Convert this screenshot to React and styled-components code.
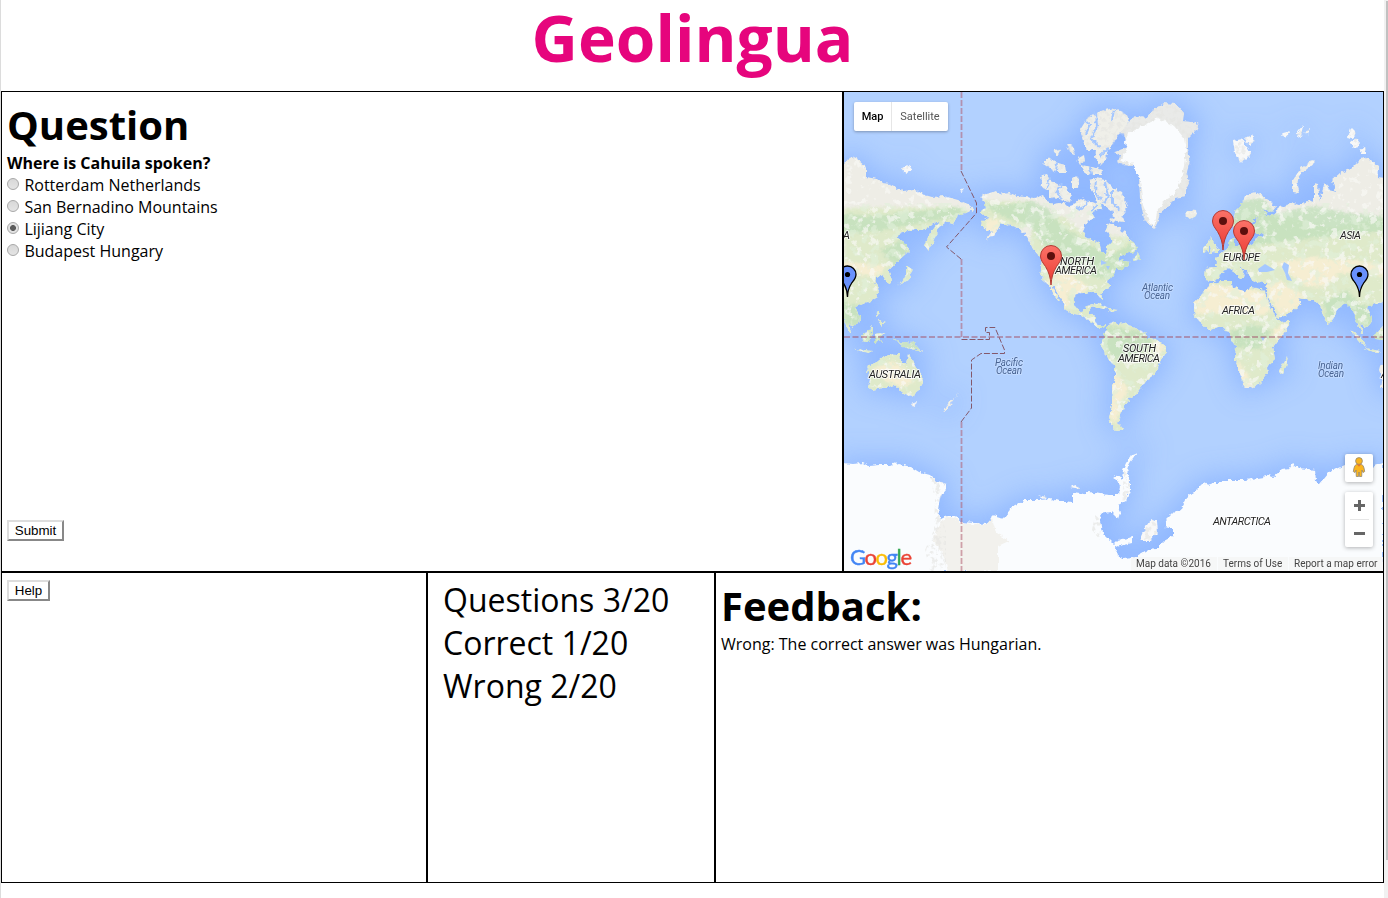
import React, { useState } from "react";
import styled, { createGlobalStyle } from "styled-components";

const GlobalStyle = createGlobalStyle`
  * { box-sizing: border-box; }
  html, body { margin: 0; padding: 0; background: #fff; height: 898px; overflow: hidden; }
  body { font-family: "Open Sans", sans-serif; font-size: 16px; line-height: 22px; color: #000; }
`;

const Shell = styled.div`
  display: grid;
  grid-template-columns: 1px 1383px 4px;
  height: 898px;
`;

const Edge = styled.div`
  background: #dcdcdc;
`;

const ScrollTrack = styled.div`
  background: #f1f1f1;
  padding: 1px 0 0 2px;
`;

const ScrollThumb = styled.div`
  height: 859px;
  background: #c1c1c1;
`;

const Page = styled.main`
  display: flex;
  flex-direction: column;
`;

const Title = styled.h1`
  margin: 0;
  padding: 0 0 16px;
  font-size: 64px;
  font-weight: 700;
  line-height: 75px;
  text-align: center;
  color: #e6057d;
`;

const Row = styled.div`
  display: flex;
  height: ${(p) => p.$height}px;
`;

const Panel = styled.section`
  display: flex;
  flex-direction: column;
  align-items: flex-start;
  width: ${(p) => p.$width}px;
  border: 1px solid #000;
  padding: ${(p) => p.$pad || "5px"};
`;

const Heading = styled.h2`
  margin: 0;
  height: 55px;
  font-size: 40px;
  font-weight: 700;
  line-height: 56px;
`;

const Prompt = styled.p`
  margin: 0;
  font-weight: 700;
`;

const Options = styled.div`
  flex: 1;
`;

const Option = styled.label`
  display: flex;
  align-items: flex-start;
  gap: 5.4px;
  height: 22px;
`;

const Radio = styled.input`
  appearance: none;
  width: 12px;
  height: 12px;
  margin: 4px 0 0;
  border: 1px solid #a8a8a8;
  border-radius: 50%;
  background: linear-gradient(#d8d8d8, #e4e4e4);
  &:checked {
    background: radial-gradient(circle, #5c5c5c 0 2.6px, #e2e2e2 3.3px);
  }
`;

const Button = styled.button`
  height: 21px;
  width: ${(p) => p.$width}px;
  margin: ${(p) => p.$margin || "0"};
  padding: 0;
  border: 2px solid;
  border-color: #ddd #888 #888 #ddd;
  background: #fff;
  color: #000;
  font: 13.33px/16px "Liberation Sans", sans-serif;
`;

const Score = styled.p`
  margin: 0;
  font-size: 32px;
  line-height: 43px;
`;

const Text = styled.p`
  margin: 0;
`;

const MapFrame = styled.section`
  position: relative;
  width: 541px;
  border: 1px solid #000;
  overflow: hidden;
  font-family: Roboto, sans-serif;
`;

const MapArt = styled.svg`
  display: block;
  width: 539px;
  height: 479px;
`;

const MapTypes = styled.div`
  position: absolute;
  left: 10px;
  top: 10px;
  display: flex;
  width: 94px;
  height: 29px;
  border-radius: 2px;
  background: #fff;
  box-shadow: 0 1px 3px rgba(0, 0, 0, 0.3);
`;

const MapType = styled.div`
  width: ${(p) => p.$width}px;
  border-left: ${(p) => (p.$active ? "0" : "1px solid #e6e6e6")};
  font-size: 11px;
  line-height: 29px;
  text-align: center;
  font-weight: ${(p) => (p.$active ? 500 : 400)};
  color: ${(p) => (p.$active ? "#000" : "#565656")};
`;

const Controls = styled.div`
  position: absolute;
  right: 10px;
  top: 362px;
  display: flex;
  flex-direction: column;
  gap: 10px;
`;

const ControlCard = styled.div`
  display: flex;
  flex-direction: column;
  align-items: center;
  justify-content: center;
  gap: 8px;
  width: 28px;
  height: ${(p) => p.$height}px;
  border-radius: 2px;
  background: #fff;
  box-shadow: 0 1px 4px rgba(0, 0, 0, 0.3);
`;

const Rule = styled.div`
  width: 19px;
  height: 1px;
  background: #e6e6e6;
`;

const Legal = styled.div`
  position: absolute;
  right: 0;
  bottom: 0;
  display: flex;
  height: 14px;
  font-size: 10px;
  line-height: 14px;
  white-space: nowrap;
  color: #444;
`;

const LegalItem = styled.span`
  width: ${(p) => p.$width}px;
  padding-left: ${(p) => p.$left}px;
  margin-left: 1px;
  background: rgba(245, 245, 245, 0.8);
`;

const NORTH_AMERICA =
  "M980 197L985 194 990 193 995 191 1003 194 1010 193 1017 196 1025 197 1035 198 1043 195 1046 201 1053 204 1060 203 1063 201 1068 206 1073 205 1079 200 1083 198 1086 203 1090 202 1095 204 1100 197 1102 208 1096 210 1092 213 1095 218 1088 221 1085 225 1083 232 1087 238 1094 241 1100 244 1101 251 1104 254 1107 255 1106 247 1112 242 1110 236 1106 232 1107 226 1108 223 1114 225 1120 227 1122 231 1125 232 1128 238 1134 243 1137 248 1133 252 1125 254 1120 257 1117 262 1123 259 1124 262 1130 263 1126 267 1120 271 1117 268 1112 276 1108 281 1109 287 1103 291 1101 295 1103 300 1099 297 1098 293 1090 292 1085 294 1077 293 1073 298 1074 305 1080 311 1086 310 1088 306 1092 305 1088 314 1095 316 1095 321 1098 325 1106 325 1104 328 1098 328 1090 321 1081 315 1074 314 1066 310 1064 303 1058 294 1054 287 1051 284 1056 294 1060 301 1055 297 1050 286 1043 280 1040 270 1041 258 1033 249 1029 241 1024 233 1018 228 1006 224 1000 224 998 230 993 236 986 240 990 234 992 231 986 230 982 225 983 221 989 219 985 215 980 212 986 207 985 202Z";
const SOUTH_AMERICA =
  "M1106 329L1108 324 1114 321 1118 324 1125 323 1133 327 1140 330 1145 333 1148 338 1155 339 1162 343 1166 347 1166 352 1160 361 1158 368 1155 374 1147 380 1144 384 1138 391 1133 398 1128 397 1130 402 1125 403 1123 410 1119 413 1121 417 1118 423 1124 430 1117 431 1112 426 1109 418 1112 406 1112 392 1115 378 1115 367 1109 360 1105 352 1101 346 1103 339Z";
const AFRICA =
  "M1210 283L1207 289 1203 292 1199 298 1194 303 1194 309 1195 316 1201 323 1206 328 1210 330 1218 327 1223 327 1226 331 1231 332 1230 339 1236 347 1235 360 1239 370 1244 387 1246 389 1253 387 1260 383 1268 373 1267 367 1275 360 1273 347 1279 339 1286 330 1290 321 1279 322 1273 313 1269 303 1265 293 1263 290 1256 288 1250 287 1246 292 1240 289 1233 287 1231 281 1222 281 1216 283Z";
const EURASIA =
  "M1204 280L1205 268 1217 267 1215 259 1223 252 1229 247 1230 240 1234 238 1234 246 1246 247 1254 244 1256 238 1266 235 1260 234 1253 234 1252 227 1258 216 1252 221 1246 226 1248 231 1246 240 1240 243 1238 237 1235 232 1233 225 1235 212 1242 203 1246 195 1256 192 1265 198 1272 202 1276 207 1272 212 1263 209 1268 216 1276 212 1280 205 1286 207 1290 202 1300 205 1307 201 1314 203 1314 183 1318 184 1320 203 1324 183 1330 190 1336 192 1332 180 1340 173 1351 169 1358 162 1362 156 1370 160 1378 167 1378 177 1389 179 1394 183 1402 184 1410 188 1415 191 1427 190 1437 195 1444 197 1456 196 1470 200 1480 204 1487 210 1477 213 1470 215 1465 224 1458 222 1450 228 1446 241 1440 250 1437 246 1442 233 1452 221 1443 225 1435 230 1425 230 1415 232 1408 237 1416 242 1422 250 1411 260 1400 271 1404 280 1401 284 1395 275 1388 278 1387 283 1391 290 1388 298 1382 302 1375 304 1367 307 1372 317 1371 323 1364 327 1361 322 1363 334 1360 330 1356 320 1353 310 1345 303 1337 310 1334 318 1328 325 1323 316 1320 305 1313 300 1298 298 1301 302 1297 308 1287 315 1278 318 1274 309 1268 298 1266 291 1267 283 1256 282 1252 280 1247 271 1240 266 1245 275 1240 279 1235 272 1229 268 1222 272 1215 281Z";
const AUSTRALIA =
  "M867 370L868 366 877 362 883 357 889 355 895 354 900 354 901 361 906 364 908 354 913 361 915 366 921 375 923 382 918 390 915 395 909 396 902 392 895 385 882 388 873 390 868 387 870 378Z";
const ANTARCTICA =
  "M843 463L853 464 863 463 868 466 880 465 890 465 897 462 899 464 911 467 919 472 930 475 937 482 946 484 946 490 940 497 938 510 941 519 947 516 953 516 958 518 961 522 975 523 986 524 991 521 993 515 1000 517 1006 518 1010 508 1018 504 1023 500 1040 500 1050 499 1060 501 1067 501 1073 502 1073 493 1080 494 1090 492 1100 494 1109 495 1119 495 1120 486 1118 481 1113 478 1118 475 1122 480 1123 470 1126 463 1132 455 1137 453 1129 463 1127 470 1130 478 1130 490 1126 501 1118 505 1120 513 1118 519 1111 512 1100 514 1103 533 1114 544 1118 540 1132 537 1132 543 1115 547 1118 556 1123 558 1135 557 1145 551 1156 549 1164 541 1173 536 1173 529 1165 527 1166 520 1174 512 1181 509 1187 497 1195 491 1201 485 1204 482 1210 486 1212 483 1220 483 1222 480 1245 480 1264 477 1265 474 1273 477 1282 470 1288 469 1293 463 1299 468 1315 470 1316 481 1319 484 1328 473 1338 468 1345 465 1352 466 1364 463 1371 467 1383 463V572H843Z";
const GREENLAND =
  "M1115 152L1127 147 1125 136 1121 133 1128 123 1132 118 1143 116 1146 119 1154 109 1164 103 1176 104 1184 113 1183 121 1192 122 1199 124 1196 130 1188 138 1188 150 1190 160 1187 172 1189 183 1185 192 1185 197 1175 199 1167 207 1160 213 1155 229 1150 225 1144 219 1140 198 1139 178 1134 166 1123 165 1118 162 1120 155Z";
const ICE_CAP =
  "M1128 134L1144 125 1158 118 1174 126 1184 138 1186 150 1184 166 1180 183 1174 194 1164 200 1157 213 1154 228 1149 220 1143 205 1140 180 1133 164 1120 160 1127 150 1125 142Z";
const ARCTIC =
  "M1080 130L1088 117 1101 111 1113 108 1122 112 1129 117 1127 127 1118 135 1113 145 1108 149 1106 159 1101 166 1095 158 1096 150 1087 150 1083 141ZM1040 176L1047 174 1051 181 1058 184 1067 188 1072 196 1070 203 1061 199 1050 198 1050 191 1042 188ZM1043 163L1049 157 1054 162 1065 165 1066 172 1057 172 1050 168ZM1067 144L1074 147 1075 154 1069 151ZM1072 177L1079 178 1078 188 1072 188ZM1081 165L1092 167 1103 170 1101 174 1085 174ZM1089 180L1096 178 1105 180 1113 188 1121 192 1128 206 1122 215 1125 222 1116 221 1112 211 1104 205 1097 200 1091 190ZM1077 159L1084 155 1085 161 1080 165ZM1109 217L1117 219 1113 223ZM1053 150L1061 149 1057 156Z";
const CHANNELS =
  "M1082 118L1090 125 1086 134M1096 112L1097 126 1091 139 1100 147M1108 148L1100 156M1114 110L1112 120M1062 184L1056 193 1062 199M1050 178L1047 188M1090 167L1091 175M1096 179L1095 192 1101 200M1105 182L1108 196 1104 203M1112 190L1112 203 1121 210M1057 162L1056 172M1088 201L1082 209 1076 207M1097 205L1091 211";
const ISLANDS =
  "M1184 215L1188 210 1196 211 1197 215 1190 220ZM1207 244L1211 236 1214 243 1219 249 1217 252 1208 253 1211 248ZM1203 248L1208 244 1208 251 1203 252ZM1133 260L1138 253 1141 259 1135 261ZM1281 368L1288 356 1286 366 1283 374 1279 372ZM1293 192L1293 180 1301 168 1313 160 1315 162 1307 169 1299 176 1297 186 1299 193ZM1350 330L1355 332 1363 341 1367 347 1360 342ZM1373 336L1379 331 1384 326 1384 340 1376 339ZM1364 348L1380 351 1376 353ZM901 283L907 273 907 266 913 270 906 280 897 286ZM902 282L908 272 911 277 908 281ZM861 335L868 331 872 326 872 333 870 342 864 342ZM875 334L886 333 878 336 883 343 878 340 875 344ZM893 338L900 342 914 343 922 352 912 349 903 347ZM854 349L872 351 868 353ZM877 311L880 314 876 317ZM878 320L885 322 882 327ZM943 411L950 401 956 397 958 393 951 404 945 412ZM1090 306L1098 303 1108 307 1103 309ZM1108 309L1118 310 1110 312Z";
const FROZEN =
  "M1233 141L1242 139 1246 145 1251 154 1245 160 1240 162 1235 153ZM1244 138L1252 135 1255 141 1249 145ZM1282 134L1290 132 1285 138ZM1296 134L1303 125 1301 137ZM1304 132L1310 129 1308 135ZM1348 137L1351 128 1356 133 1353 138ZM1350 143L1356 138 1360 143 1356 149ZM1360 150L1366 147 1366 154 1361 154ZM901 168L908 166 913 169 906 174ZM960 191L964 189 962 192ZM1037 495L1047 497 1044 499ZM1070 487L1077 485 1080 489ZM1140 541L1147 525 1151 519 1156 521 1157 533 1150 541ZM911 404L917 402 914 408Z";

const MEDIUM_GREEN =
  "M980 204L1006 205 1030 201 1048 208 1062 226 1083 240 1108 256 1138 240 1145 260 1110 280 1082 273 1050 255 1030 225 1006 218ZM1034 215L1043 209 1047 215ZM1230 203L1262 198 1275 214 1315 206 1345 213 1384 216 1470 207 1480 216 1440 222 1395 230 1350 235 1280 242 1224 250ZM1100 325L1146 332 1153 342 1133 361 1113 358 1102 344ZM1230 331L1253 324 1272 331 1260 349 1234 347ZM1353 306L1376 305 1372 326 1355 324ZM1392 250L1430 233 1410 268ZM1372 331L1384 331 1384 341 1373 340ZM1323 302L1348 290 1364 310 1350 312 1328 321ZM861 329L925 342 918 353 862 344Z";
const SAND =
  "M1046 280L1066 271 1089 287 1078 298 1066 293 1073 311 1064 306 1050 289ZM1194 302L1209 284 1246 288 1265 292 1272 310 1262 316 1240 311 1196 315ZM1265 286L1280 281 1305 296 1299 307 1280 317ZM1276 263L1310 257 1358 261 1398 266 1390 276 1340 273 1325 287 1305 286ZM1113 369L1128 388 1121 406 1116 425 1109 416ZM872 369L892 361 905 369 915 382 901 387 884 380ZM1236 359L1248 374 1250 387 1242 385ZM1272 331L1289 321 1280 342ZM986 219L1000 220 1000 231 985 234ZM1152 340L1166 346 1158 357Z";

const AREA_LABELS = [
  ["NORTH", 1060, 265, 34],
  ["AMERICA", 1055, 274, 42],
  ["SOUTH", 1123, 352, 33],
  ["AMERICA", 1118, 362, 42],
  ["AFRICA", 1222, 314, 33],
  ["EUROPE", 1223, 261, 37],
  ["ASIA", 1340, 239, 21],
  ["A", 843, 239, 6],
  ["AUSTRALIA", 869, 378, 52],
  ["AUSTRALIA", 1381, 378, 52],
  ["ANTARCTICA", 1213, 525, 58],
];
const SEA_LABELS = [
  ["Atlantic", 1142, 291, 31],
  ["Ocean", 1144, 299, 26],
  ["Pacific", 995, 366, 28],
  ["Ocean", 996, 374, 26],
  ["Indian", 1318, 369, 25],
  ["Ocean", 1318, 377, 26],
];

const Label = styled.text`
  font: italic ${(p) => (p.$sea ? "400 10px" : "400 11px")} Roboto, sans-serif;
  fill: ${(p) => (p.$sea ? "#496493" : "#222")};
  stroke: ${(p) => (p.$sea ? "#c5dcff" : "#fff")};
  stroke-width: 2px;
  stroke-opacity: 0.75;
  stroke-linejoin: round;
  paint-order: stroke;
`;

const LogoText = styled.text`
  font: 400 22px Lato, sans-serif;
  stroke-width: 0.4px;
`;

const LOGO = [
  ["G", "#4285f4"],
  ["o", "#ea4335"],
  ["o", "#fbbc05"],
  ["g", "#4285f4"],
  ["l", "#34a853"],
  ["e", "#ea4335"],
];

function RedPin({ x, y }) {
  return (
    <g transform={`translate(${x} ${y})`}>
      <path
        d="M0 0C-.6-8-2-12.500-5.500-18.500C-8-22-10.500-25-10.500-29A10.500 10.500 0 0 1 10.500-29C10.500-25 8-22 5.500-18.500C2-12.500.6-8 0 0Z"
        fill="url(#pinRed)"
        stroke="#b33a33"
        strokeWidth="1"
      />
      <circle cy="-29" r="4" fill="#5c0f0d" />
    </g>
  );
}

function BluePin({ x, y }) {
  return (
    <g transform={`translate(${x} ${y})`}>
      <path
        d="M0 0C0-7-1.500-10-4.500-14.500C-7-17.500-8.500-19-8.500-22.500A8.500 8.500 0 0 1 8.500-22.500C8.500-19 7-17.500 4.500-14.500C1.500-10 0-7 0 0Z"
        fill="#6991fd"
        stroke="#000"
        strokeWidth="1.3"
      />
      <circle cy="-22.500" r="2.600" fill="#000" />
    </g>
  );
}

function WorldMap() {
  return (
    <MapArt viewBox="844 92 539 479">
      <defs>
        <linearGradient id="pinRed" x1="0" y1="0" x2="0" y2="1">
          <stop offset="0" stopColor="#fb7268" />
          <stop offset="0.7" stopColor="#f04b42" />
          <stop offset="1" stopColor="#d93a30" />
        </linearGradient>
        <filter id="shelf" x="740" y="20" width="760" height="640" filterUnits="userSpaceOnUse">
          <feGaussianBlur stdDeviation="14" />
        </filter>
        <filter id="soft" x="-10%" y="-10%" width="120%" height="120%">
          <feGaussianBlur stdDeviation="1.500" />
        </filter>
        <filter id="rough" x="840" y="88" width="700" height="490" filterUnits="userSpaceOnUse">
          <feTurbulence type="fractalNoise" baseFrequency="0.25" numOctaves="2" seed="4" result="n" />
          <feDisplacementMap in="SourceGraphic" in2="n" scale="5" xChannelSelector="R" yChannelSelector="G" />
        </filter>
        <filter id="speckWhite" x="840" y="88" width="700" height="490" filterUnits="userSpaceOnUse">
          <feTurbulence type="fractalNoise" baseFrequency="0.13" numOctaves="4" seed="8" />
          <feColorMatrix values="0 0 0 0 .95  0 0 0 0 .95  0 0 0 0 .92  9 0 0 0 -5.200" />
        </filter>
        <filter id="speckGreen" x="840" y="88" width="700" height="490" filterUnits="userSpaceOnUse">
          <feTurbulence type="fractalNoise" baseFrequency="0.1" numOctaves="4" seed="21" />
          <feColorMatrix values="0 0 0 0 .75  0 0 0 0 .87  0 0 0 0 .7  0 9 0 0 -4.900" />
        </filter>
        <filter id="relief" x="840" y="88" width="700" height="490" filterUnits="userSpaceOnUse">
          <feTurbulence type="fractalNoise" baseFrequency="0.22" numOctaves="3" seed="5" />
          <feColorMatrix values="0 0 0 0 .78  0 0 0 0 .78  0 0 0 0 .76  0 6 0 0 -2.900" />
        </filter>
        <g id="warmLand">
          <path d={NORTH_AMERICA} />
          <path d={SOUTH_AMERICA} />
          <path d={AFRICA} />
          <path d={EURASIA} />
          <path d={EURASIA} transform="translate(-512 0)" />
          <path d={AUSTRALIA} />
          <path d={AUSTRALIA} transform="translate(512 0)" />
          <path d={ISLANDS} />
        </g>
        <clipPath id="warmClip">
          <path d={NORTH_AMERICA} />
          <path d={SOUTH_AMERICA} />
          <path d={AFRICA} />
          <path d={EURASIA} />
          <path d={EURASIA} transform="translate(-512 0)" />
          <path d={AUSTRALIA} />
          <path d={ISLANDS} />
        </clipPath>
        <clipPath id="temperateClip">
          <path d="M844 203H1384V440H844Z" />
        </clipPath>
        <clipPath id="coldClip">
          <path d={GREENLAND} />
          <path d={ARCTIC} />
          <path d={FROZEN} />
          <path d="M930 476L946 484 940 500 938 512 946 530 946 571 930 571 925 550 934 530 935 500Z" />
          <path d="M1095 515L1101 520 1100 540 1092 530ZM1124 470L1130 478 1130 495 1122 503Z" />
        </clipPath>
      </defs>

      <rect x="844" y="92" width="539" height="479" fill="#b2d1ff" />
      <g filter="url(#shelf)" fill="#86b0ff" stroke="#86b0ff" strokeWidth="10" opacity="0.8">
        <use href="#warmLand" />
        <path d={GREENLAND + ARCTIC + ANTARCTICA} />
        <path d={FROZEN} strokeWidth="3" />
      </g>

      <g filter="url(#rough)">
        <use href="#warmLand" fill="#eeede6" />
        <g clipPath="url(#warmClip)">
          <path
            d="M1035 218L1064 217 1082 232 1144 240V330L1170 347V432H1100V330L1040 300 1030 238ZM844 208L950 207 975 213 940 240 905 290 890 350H844ZM1200 225L1260 214 1290 218 1330 228 1384 218V350L1260 392 1185 322ZM855 350H930V400H855ZM975 200L1030 202 1024 228H975Z"
            fill="#dfeaca"
            filter="url(#soft)"
          />
          <g fill="#c2e0bc" opacity="0.8" filter="url(#soft)">
            <path d={MEDIUM_GREEN} />
            <path d={MEDIUM_GREEN} transform="translate(-512 0)" />
          </g>
          <g fill="#f6eed2" filter="url(#soft)">
            <path d={SAND} />
            <path d={SAND} transform="translate(-512 0)" />
          </g>
        </g>
        <path d={ARCTIC} fill="#efefe9" />
        <path d={GREENLAND} fill="#e9eae8" />
        <path d={FROZEN} fill="#f8f8f8" />
        <path d={ANTARCTICA} fill="#fafcfe" />
        <path
          d="M946 517L955 518 961 523 986 525 992 518 996 532 1009 541 998 546 998 571H948L942 552 934 542 935 532Z"
          fill="#f2f1ed"
        />
      </g>
      <g clipPath="url(#warmClip)">
        <g clipPath="url(#temperateClip)">
          <rect x="844" y="92" width="539" height="479" filter="url(#speckGreen)" opacity="0.6" />
        </g>
        <rect x="844" y="92" width="539" height="479" filter="url(#speckWhite)" opacity="0.65" />
      </g>
      <g clipPath="url(#coldClip)">
        <rect x="844" y="92" width="539" height="479" filter="url(#relief)" opacity="0.65" />
      </g>
      <path d={ICE_CAP} fill="#fafcfe" filter="url(#rough)" />
      <path d={CHANNELS} fill="none" stroke="#a3c6ff" strokeWidth="2" filter="url(#rough)" />
      <path
        d="M1284 262L1289 265 1288 273 1292 281 1287 280 1285 273 1282 267ZM1258 269L1265 264 1275 270 1267 272 1259 272ZM1101 260L1107 263 1101 265ZM1106 266L1110 266 1108 270ZM1261 337L1265 337 1263 341Z"
        fill="#a5c8ff"
      />

      <path d="M844 337H1383" stroke="#a4536a" strokeOpacity="0.5" strokeWidth="1.800" strokeDasharray="6 2.500" />
      <path
        d="M961.500 92V171M961.500 259V339M961.500 422V571"
        fill="none"
        stroke="#b05c70"
        strokeOpacity="0.55"
        strokeWidth="1.800"
        strokeDasharray="6 2"
      />
      <path
        d="M961 171L976.500 203V213L946.500 247 961 259M961.500 339.500H989.500V332.500H985.500V327.500H995L1004.500 350V353.500H981L971.500 360V408L961 422"
        fill="none"
        stroke="#84586b"
        strokeWidth="1"
        strokeDasharray="6 2"
      />

      {AREA_LABELS.map(([text, x, y, w]) => (
        <Label key={text + x + y} x={x} y={y} textLength={w}>{text}</Label>
      ))}
      {SEA_LABELS.map(([text, x, y, w]) => (
        <Label key={text + x + y} $sea x={x} y={y} textLength={w}>{text}</Label>
      ))}

      <RedPin x={1223} y={250} />
      <RedPin x={1244} y={260} />
      <RedPin x={1051} y={285} />
      <BluePin x={847.5} y={297} />
      <BluePin x={1359.5} y={297} />

      <LogoText x="850" y="564.500" textLength="62">
        {LOGO.map(([letter, color], i) => (
          <tspan key={i} fill={color} stroke={color}>{letter}</tspan>
        ))}
      </LogoText>
    </MapArt>
  );
}

function Pegman() {
  return (
    <svg width="14" height="22" viewBox="0 0 14 22">
      <path
        d="M4.500 7.500Q2.500 8 2 11L1.300 14.500 3 15.500 4 13 4.300 19.500H6.600L7 15 7.400 19.500H9.700L10 13 11 15.500 12.700 14.500 12 11Q11.500 8 9.500 7.500Z"
        fill="#fbb51e"
        stroke="#8f8675"
        strokeWidth="0.8"
      />
      <circle cx="7" cy="4" r="3.400" fill="#fbb51e" stroke="#8f8675" strokeWidth="0.8" />
      <path d="M4.800 7.600H9.200L7 9.800Z" fill="#e5762c" />
    </svg>
  );
}

function ZoomGlyph({ plus }) {
  return (
    <svg width="11" height="11" viewBox="0 0 11 11">
      <path d={plus ? "M0 4H4V0H7V4H11V7H7V11H4V7H0Z" : "M0 4H11V7H0Z"} fill="#666" />
    </svg>
  );
}

const CHOICES = ["Rotterdam Netherlands", "San Bernadino Mountains", "Lijiang City", "Budapest Hungary"];

export default function App() {
  const [choice, setChoice] = useState(2);
  return (
    <>
      <GlobalStyle />
      <Shell>
        <Edge />
        <Page>
          <Title>Geolingua</Title>
          <Row $height={481}>
            <Panel $width={842}>
              <Heading>Question</Heading>
              <Prompt>Where is Cahuila spoken?</Prompt>
              <Options>
                {CHOICES.map((label, i) => (
                  <Option key={label}>
                    <Radio type="radio" name="answer" checked={choice === i} onChange={() => setChoice(i)} />
                    {label}
                  </Option>
                ))}
              </Options>
              <Button $width={57} $margin="0 0 25px">Submit</Button>
            </Panel>
            <MapFrame>
              <WorldMap />
              <MapTypes>
                <MapType $active $width={37}>Map</MapType>
                <MapType $width={57}>Satellite</MapType>
              </MapTypes>
              <Controls>
                <ControlCard $height={28}>
                  <Pegman />
                </ControlCard>
                <ControlCard $height={55}>
                  <ZoomGlyph plus />
                  <Rule />
                  <ZoomGlyph />
                </ControlCard>
              </Controls>
              <Legal>
                <LegalItem $width={86} $left={5}>Map data ©2016</LegalItem>
                <LegalItem $width={70} $left={5}>Terms of Use</LegalItem>
                <LegalItem $width={94} $left={5}>Report a map error</LegalItem>
              </Legal>
            </MapFrame>
          </Row>
          <Row $height={311}>
            <Panel $width={426}>
              <Button $width={43} $margin="2px 0 0">Help</Button>
            </Panel>
            <Panel $width={288} $pad="5px 15px">
              <Score>Questions 3/20</Score>
              <Score>Correct 1/20</Score>
              <Score>Wrong 2/20</Score>
            </Panel>
            <Panel $width={669}>
              <Heading>Feedback:</Heading>
              <Text>Wrong: The correct answer was Hungarian.</Text>
            </Panel>
          </Row>
        </Page>
        <ScrollTrack>
          <ScrollThumb />
        </ScrollTrack>
      </Shell>
    </>
  );
}
